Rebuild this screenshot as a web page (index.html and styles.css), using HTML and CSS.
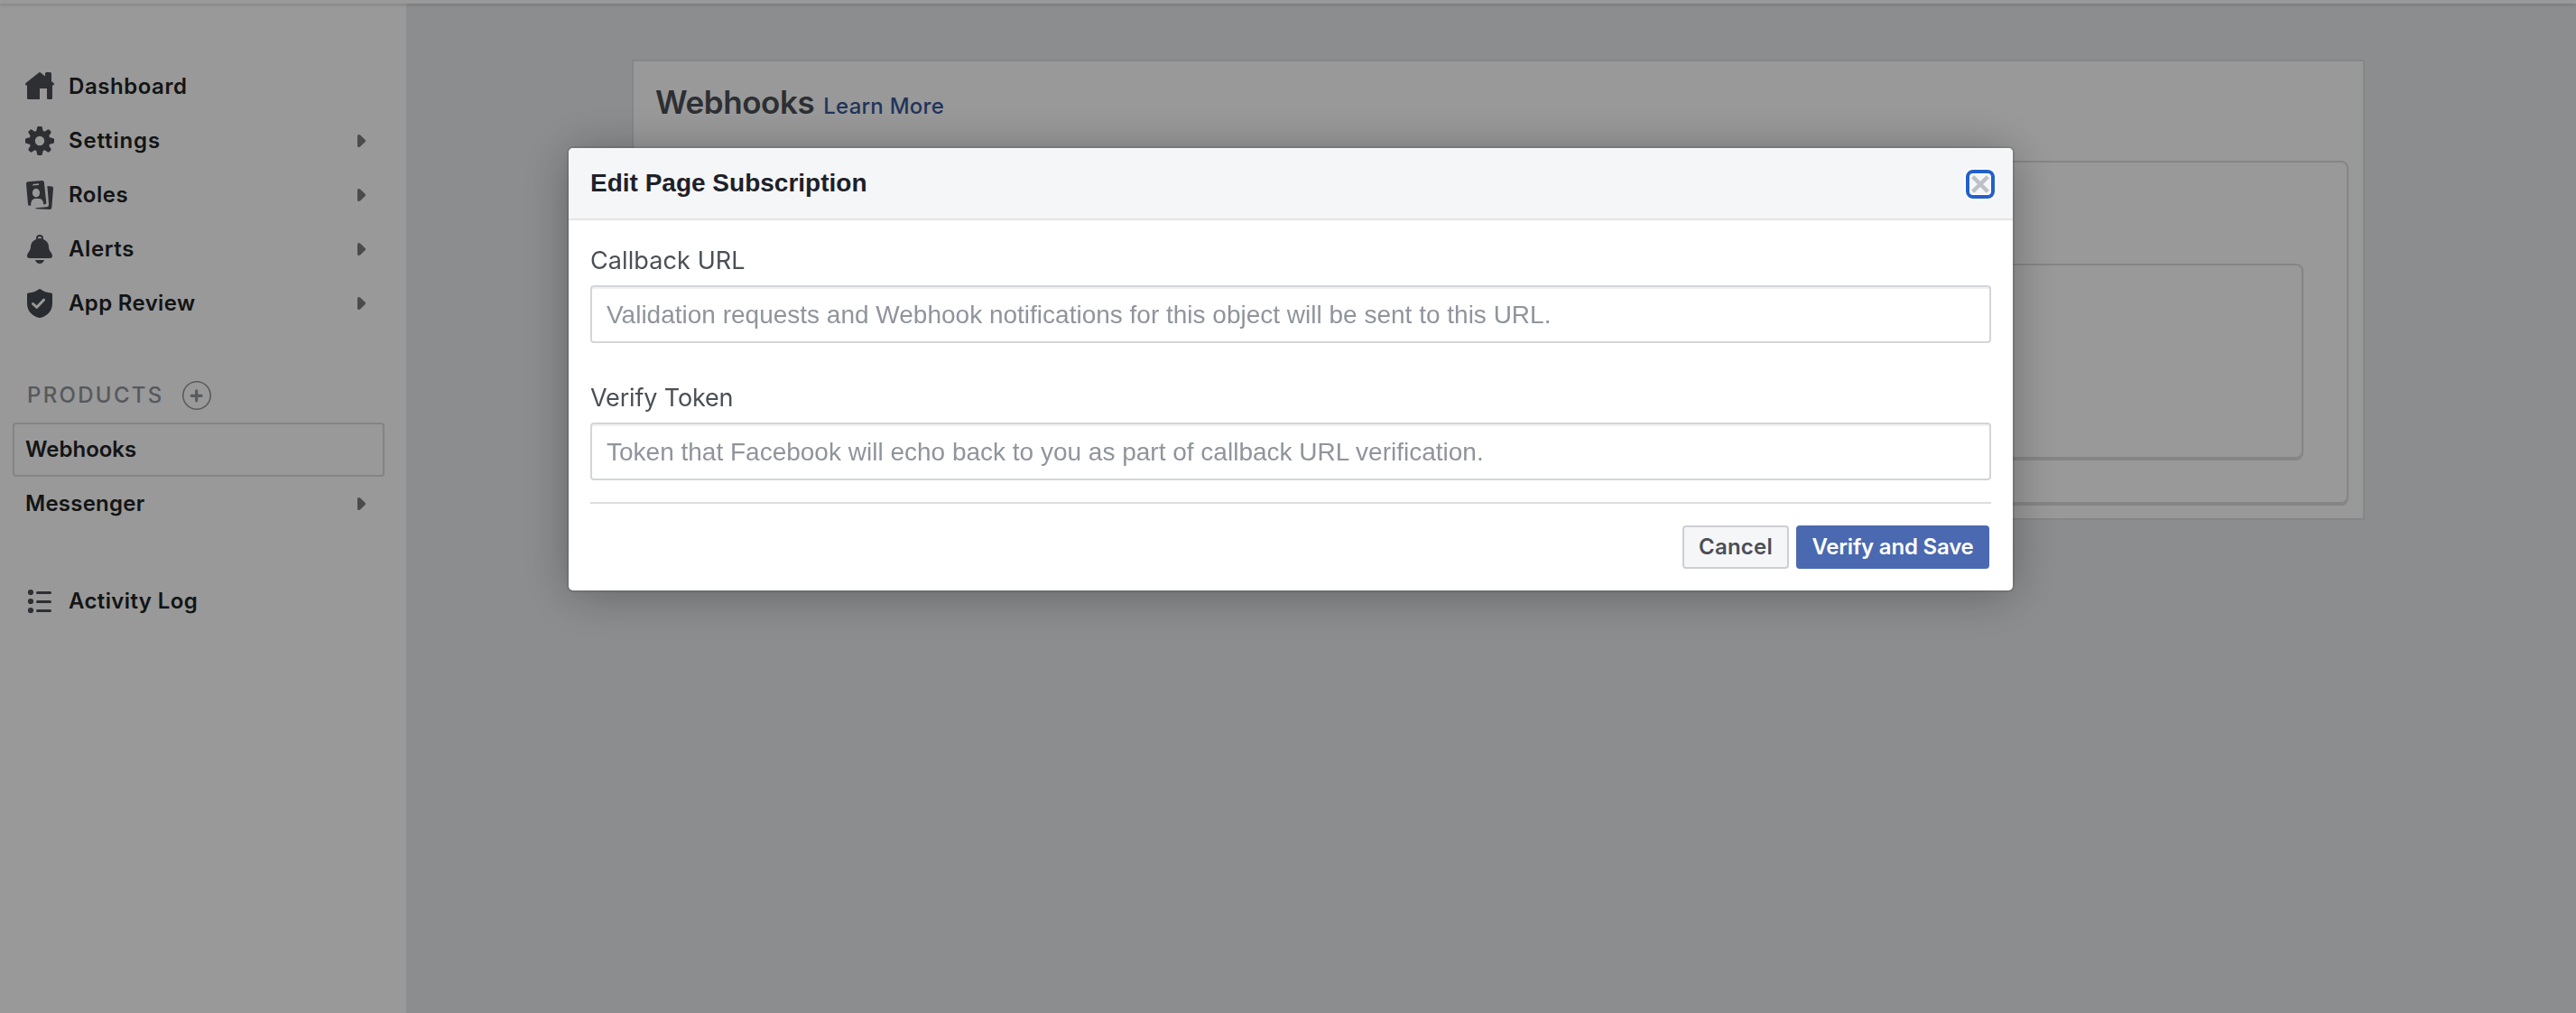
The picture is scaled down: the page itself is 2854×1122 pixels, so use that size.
FILE: index.html
```html
<!DOCTYPE html>
<html lang="en">
<head>
<meta charset="utf-8">
<title>Webhooks</title>
<link rel="stylesheet" href="styles.css">
</head>
<body>
<div class="page">
  <header class="topbar"></header>
  <div class="columns">
    <aside class="sidebar">
      <nav class="nav">
        <a class="nav-item">
          <svg class="icon" viewBox="0 0 32 32"><path d="M15 .4q1-.8 2 0l5 4V1.500Q22 0 23.500 0h4Q29 0 29 1.500V10l2.500 2q1 1 0 2.200L30 14.500V28.500Q30 30 28.500 30H25Q24 30 24 29V18H16V30H3.500Q2 30 2 28.500V14.500L.5 14.200Q-.5 13 .5 12z"/></svg>
          <span class="label label-dashboard">Dashboard</span>
        </a>
        <a class="nav-item">
          <svg class="icon" viewBox="0 0 32 32"><path fill-rule="evenodd" d="M13.200 1Q13.400 0 14.400 0h3.200q1 0 1.200 1l.9 3.900 1.800.8 3.400-2.200q.9-.5 1.600.2l1.800 1.800q.7.700.2 1.600l-2.200 3.400.8 1.800 3.900.9q1 .2 1 1.200v3.200q0 1-1 1.200l-3.900.9-.8 1.800 2.200 3.400q.5.900-.2 1.600l-1.800 1.800q-.7.700-1.600.2l-3.400-2.200-1.800.8-.9 3.900q-.2 1-1.200 1h-3.200q-1 0-1.200-1l-.9-3.900-1.800-.8-3.400 2.200q-.9.500-1.600-.2l-1.800-1.800q-.7-.7-.2-1.600l2.200-3.400-.8-1.800-3.900-.9Q0 18.600 0 17.600v-3.200q0-1 1-1.200l3.900-.9.8-1.800-2.200-3.400q-.5-.9.200-1.600l1.800-1.800q.7-.7 1.600-.2l3.400 2.200 1.800-.8zM16 10.800a5.200 5.200 0 1 0 0 10.400a5.200 5.200 0 0 0 0-10.400z"/></svg>
          <span class="label label-settings">Settings</span>
          <svg class="arrow" viewBox="0 0 10 14"><path d="M0 1.500Q0 0 1.500 0 2.600 0 3.300.7L8.700 6q1 1 0 2L3.300 13.300Q2.600 14 1.500 14 0 14 0 12.500z"/></svg>
        </a>
        <a class="nav-item">
          <svg class="icon" viewBox="0 0 32 32"><path fill-rule="evenodd" d="M3 1.300 18.900 0Q20.600 0 20.800 1.600L23.300 24.500Q23.400 26 22 26.300L20.200 26.500Q20 20.500 15.600 20H10.500Q6 20.600 6.200 27.700L4.600 27.800Q3.200 27.800 3 26.300L1 3.400Q1 1.600 3 1.300zM8.300 3.900 8.500 5.500 15 4.900 14.900 3.300zM12 8.700c-2.500 0-4.100 2.200-4.100 4.900s1.800 4.900 4.200 4.900 4-2.200 4-4.900-1.700-4.900-4.100-4.900z"/><path d="M24.400 6 29.500 6.500Q31 6.800 31 8.400L29.300 30Q29 32 27.300 32L11.500 31.300Q11 30.600 12 30.300L23.500 29.300Q26.300 28.800 26 25.700z"/></svg>
          <span class="label label-roles">Roles</span>
          <svg class="arrow" viewBox="0 0 10 14"><path d="M0 1.500Q0 0 1.500 0 2.600 0 3.300.7L8.700 6q1 1 0 2L3.300 13.300Q2.600 14 1.500 14 0 14 0 12.500z"/></svg>
        </a>
        <a class="nav-item">
          <svg class="icon" viewBox="0 0 32 32"><path fill-rule="evenodd" d="M12 5.100V4a4 4 0 0 1 8 0V5.100Q25.700 7.400 26 13.500C26.200 18.500 30 20 30 23.500Q30 26 27 26H5Q2 26 2 23.500C2 20 5.800 18.500 6 13.500Q6.300 7.400 12 5.100zM13.800 4.300Q16 3.800 18.200 4.300A2.200 2.300 0 0 0 13.800 4.300zM11 28H21Q19.500 32 16 32T11 28z"/></svg>
          <span class="label label-alerts">Alerts</span>
          <svg class="arrow" viewBox="0 0 10 14"><path d="M0 1.500Q0 0 1.500 0 2.600 0 3.300.7L8.700 6q1 1 0 2L3.300 13.300Q2.600 14 1.500 14 0 14 0 12.500z"/></svg>
        </a>
        <a class="nav-item">
          <svg class="icon icon-shield" viewBox="0 0 32 32"><path d="M14.800.5Q16-.4 17.200.5 21.500 4 28.700 4.600 30 4.800 30 6V16C30 25 24 30 17.500 31.700Q16 32.200 14.500 31.700C8 30 2 25 2 16V6Q2 4.800 3.300 4.600 10.500 4 14.800.5z"/><path class="tick" d="M8.500 16.500 12.800 20.300 20.500 12.200"/></svg>
          <span class="label label-review">App Review</span>
          <svg class="arrow" viewBox="0 0 10 14"><path d="M0 1.500Q0 0 1.500 0 2.600 0 3.300.7L8.700 6q1 1 0 2L3.300 13.300Q2.600 14 1.500 14 0 14 0 12.500z"/></svg>
        </a>
      </nav>
      <div class="products">
        <span class="products-title">PRODUCTS</span>
        <svg class="add" viewBox="0 0 32 32"><circle cx="16" cy="16" r="15.200"/><path d="M10.200 16.300H21.200M15.700 10.800V21.800"/></svg>
      </div>
      <nav class="product-list">
        <a class="product selected"><span class="label">Webhooks</span></a>
        <a class="product">
          <span class="label label-messenger">Messenger</span>
          <svg class="arrow" viewBox="0 0 10 14"><path d="M0 1.500Q0 0 1.500 0 2.600 0 3.300.7L8.700 6q1 1 0 2L3.300 13.300Q2.600 14 1.500 14 0 14 0 12.500z"/></svg>
        </a>
      </nav>
      <a class="nav-item">
        <svg class="icon" viewBox="0 0 32 32"><circle cx="6" cy="6" r="3.100"/><circle cx="6" cy="16" r="3.100"/><circle cx="6" cy="26" r="3.100"/><path class="rule" d="M13.500 6.500H27.500M13.500 16.500H27.500M13.500 26.500H27.500"/></svg>
        <span class="label label-activity">Activity Log</span>
      </a>
    </aside>
    <main class="main">
      <section class="card">
        <div class="card-head">
          <h1 class="card-title">Webhooks</h1>
          <a class="learn">Learn More</a>
        </div>
        <div class="panel"><div class="panel inner"></div></div>
      </section>
    </main>
  </div>
</div>
<div class="overlay">
  <div class="dialog">
    <div class="dialog-head">
      <h2 class="dialog-title">Edit Page Subscription</h2>
      <button class="close" aria-label="Close"><svg class="cross" viewBox="0 0 20 20"><path d="M1.700 1.700 18.300 18.300M18.300 1.700 1.700 18.300"/></svg></button>
    </div>
    <div class="dialog-body">
      <label class="field-label label-callback" for="callback">Callback URL</label>
      <input class="field" id="callback" type="text" placeholder="Validation requests and Webhook notifications for this object will be sent to this URL.">
      <label class="field-label label-token" for="token">Verify Token</label>
      <input class="field" id="token" type="text" placeholder="Token that Facebook will echo back to you as part of callback URL verification.">
      <div class="actions">
        <button class="button cancel">Cancel</button>
        <button class="button save">Verify and Save</button>
      </div>
    </div>
  </div>
</div>
</body>
</html>
```
FILE: styles.css
```css
* { box-sizing: border-box; }
html, body { margin: 0; height: 100%; overflow: hidden; }
body { font-family: Inter, "Liberation Sans", sans-serif; color: #212325; }
svg { display: block; flex: none; }

.page { display: flex; flex-direction: column; height: 100%; background: #e9ebee; }
.topbar { position: relative; z-index: 1; flex: none; height: 4px; background: #fff; box-shadow: 0 1px 4px rgba(0, 0, 0, .2); }
.columns { display: flex; flex: 1; }

.sidebar { flex: none; width: 450px; padding-top: 62px; background: #fff; }
.nav-item { display: flex; align-items: center; height: 60px; padding: 0 44px 0 28px; }
.icon { width: 32px; height: 32px; margin-right: 16px; fill: #4b4f56; }
.icon-shield { fill: #444950; }
.tick { fill: none; stroke: #fff; stroke-width: 3; stroke-linecap: round; stroke-linejoin: round; }
.rule { fill: none; stroke: #4b4f56; stroke-width: 3; stroke-linecap: round; }
.label { font-size: 24px; font-weight: 600; line-height: 28px; white-space: nowrap; }
.label-dashboard { letter-spacing: .55px; }
.label-settings { letter-spacing: .86px; }
.label-roles { letter-spacing: .5px; }
.label-alerts { letter-spacing: .6px; }
.label-review { letter-spacing: .35px; }
.label-messenger { letter-spacing: .24px; }
.label-activity { letter-spacing: .38px; }
.arrow { width: 10px; height: 14px; margin-left: auto; fill: #7d7d7d; }

.products { display: flex; align-items: center; height: 32px; margin-top: 56px; padding-left: 30px; }
.products-title { font-size: 24px; font-weight: 500; line-height: 28px; letter-spacing: 2.29px; color: #90949c; }
.add { width: 32px; height: 32px; margin-left: 20px; fill: none; stroke: #97989c; stroke-width: 1.6; }
.add path { stroke-width: 3.2; stroke-linecap: round; }
.product-list { margin: 14px 24px 48px 14px; }
.product { display: flex; align-items: center; height: 60px; padding: 0 18px 0 12px; border: 2px solid transparent; border-radius: 4px; }
.selected { border-color: #dcdcde; }

.main { flex: 1; padding: 62px 0 0 250px; }
.card { width: 1920px; height: 510px; padding: 24px 16px 0; border: 2px solid #dddfe2; background: #fff; }
.card-head { display: flex; align-items: baseline; gap: 10px; height: 86px; padding-left: 8px; }
.card-title { margin: 0; font-size: 35px; font-weight: 600; line-height: 42px; letter-spacing: -.43px; color: #4b4f56; }
.learn { font-size: 24px; font-weight: 500; line-height: 28px; letter-spacing: .25px; color: #385898; }
.panel { height: 380px; padding: 112px 48px 0; border: 2px solid #dedede; border-radius: 8px; box-shadow: 0 2px 0 #dedede; }
.panel.inner { height: 216px; }

.overlay { position: fixed; inset: 0; display: flex; align-items: flex-start; padding: 164px 0 0 630px; background: rgba(0, 0, 0, .4); z-index: 2; }
.dialog { width: 1600px; height: 490px; border-radius: 5px; background: #fff; box-shadow: 0 4px 52px rgba(0, 0, 0, .3), 0 0 0 2px rgba(0, 0, 0, .1); }
.dialog-head { display: flex; align-items: center; justify-content: space-between; height: 80px; padding: 0 20px 0 24px; border-bottom: 2px solid #e5e5e6; border-radius: 5px 5px 0 0; background: #f5f6f7; }
.dialog-title { margin: 0; font: bold 28px/32px "Liberation Sans", Arial, sans-serif; color: #1d2129; }
.close { display: flex; align-items: center; justify-content: center; width: 32px; height: 32px; margin-top: 2px; padding: 0; border: 4px solid #2460c8; border-radius: 8px; background: #f5f6f7; box-shadow: 0 0 0 2px #fff, inset 0 0 0 1px #fff; }
.cross { width: 20px; height: 20px; fill: none; stroke: #bec0c7; stroke-width: 4.4; }

.dialog-body { display: flex; flex-direction: column; padding: 29px 24px 0; }
.field-label { height: 32px; margin-bottom: 11px; font-size: 27px; line-height: 32px; color: #4b4f56; }
.label-callback { letter-spacing: .1px; }
.label-token { letter-spacing: -.16px; }
.field { width: 1552px; height: 64px; margin: 0 0 45px; padding: 2px 0 0 16px; border: 2px solid #d4d5da; border-radius: 4px; background: #fff; box-shadow: inset 0 2px 0 #f1f1f3; font: 28px/32px "Liberation Sans", Arial, sans-serif; }
.field::placeholder { color: #90949c; opacity: 1; }
.actions { display: flex; justify-content: flex-end; gap: 8px; margin-top: -21px; padding: 24px 2px 0 0; border-top: 2px solid #dcdde3; }
.button { height: 48px; padding: 0; border: 2px solid; border-radius: 4px; font: 600 24px/28px Inter, "Liberation Sans", sans-serif; }
.cancel { width: 118px; border-color: #ccd0d5; background: #f5f6f7; color: #4b4f56; letter-spacing: .2px; }
.save { width: 214px; border-color: #4a69b0; background: #4a69b0; color: #fff; letter-spacing: -.2px; }
```
